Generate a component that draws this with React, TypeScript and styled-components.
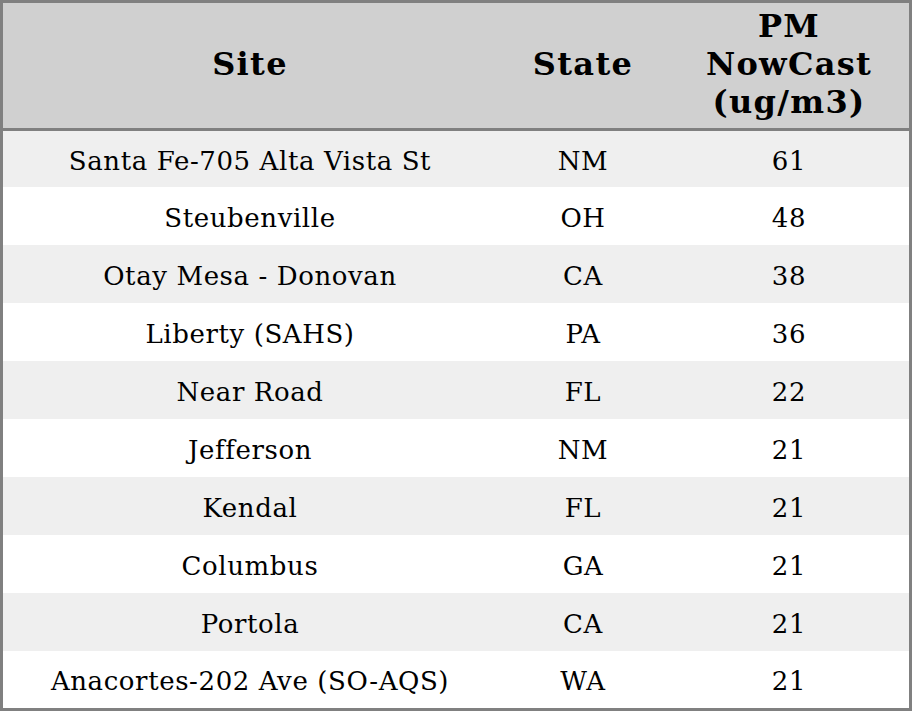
import React from "react";
import styled, { createGlobalStyle } from "styled-components";

const GlobalStyle = createGlobalStyle`
    html, body {
        margin: 0;
        padding: 0;
        background: #ffffff;
    }
    body {
        font-family: "DejaVu Serif", "Liberation Serif", serif;
        color: #000000;
    }
`;

const Table = styled.table`
    width: 912px;
    border-collapse: separate;
    border-spacing: 0;
    border: 3px solid #808080;
    table-layout: fixed;
`;

const HeadCell = styled.th<{ $width: number }>`
    width: ${(p) => p.$width}px;
    padding: 4px 0 7px;
    background-color: #d0d0d0;
    border-bottom: 3px solid #808080;
    font-size: 32px;
    font-weight: bold;
    letter-spacing: 1.3px;
    line-height: 38px;
    text-align: center;
    vertical-align: middle;
`;

const Row = styled.tr<{ $shaded: boolean }>`
    background-color: ${(p) => (p.$shaded ? "#efefef" : "#ffffff")};

    & > td {
        height: 58px;
    }
    &:first-child > td {
        height: 56px;
    }
    &:last-child > td {
        height: 57px;
    }
`;

const Cell = styled.td`
    box-sizing: border-box;
    padding: 3px 0 0;
    font-size: 26px;
    letter-spacing: 0.6px;
    line-height: normal;
    text-align: center;
    vertical-align: middle;
    white-space: nowrap;
`;

const rows = [
    { site: "Santa Fe-705 Alta Vista St", state: "NM", pm: 61 },
    { site: "Steubenville", state: "OH", pm: 48 },
    { site: "Otay Mesa - Donovan", state: "CA", pm: 38 },
    { site: "Liberty (SAHS)", state: "PA", pm: 36 },
    { site: "Near Road", state: "FL", pm: 22 },
    { site: "Jefferson", state: "NM", pm: 21 },
    { site: "Kendal", state: "FL", pm: 21 },
    { site: "Columbus", state: "GA", pm: 21 },
    { site: "Portola", state: "CA", pm: 21 },
    { site: "Anacortes-202 Ave (SO-AQS)", state: "WA", pm: 21 },
];

export default function App() {
    return (
        <>
            <GlobalStyle />
            <Table>
                <thead>
                    <tr>
                        <HeadCell $width={494}>Site</HeadCell>
                        <HeadCell $width={172}>State</HeadCell>
                        <HeadCell $width={240}>
                            PM
                            <br />
                            NowCast
                            <br />
                            (ug/m3)
                        </HeadCell>
                    </tr>
                </thead>
                <tbody>
                    {rows.map((r, i) => (
                        <Row key={r.site} $shaded={i % 2 === 0}>
                            <Cell>{r.site}</Cell>
                            <Cell>{r.state}</Cell>
                            <Cell>{r.pm}</Cell>
                        </Row>
                    ))}
                </tbody>
            </Table>
        </>
    );
}
